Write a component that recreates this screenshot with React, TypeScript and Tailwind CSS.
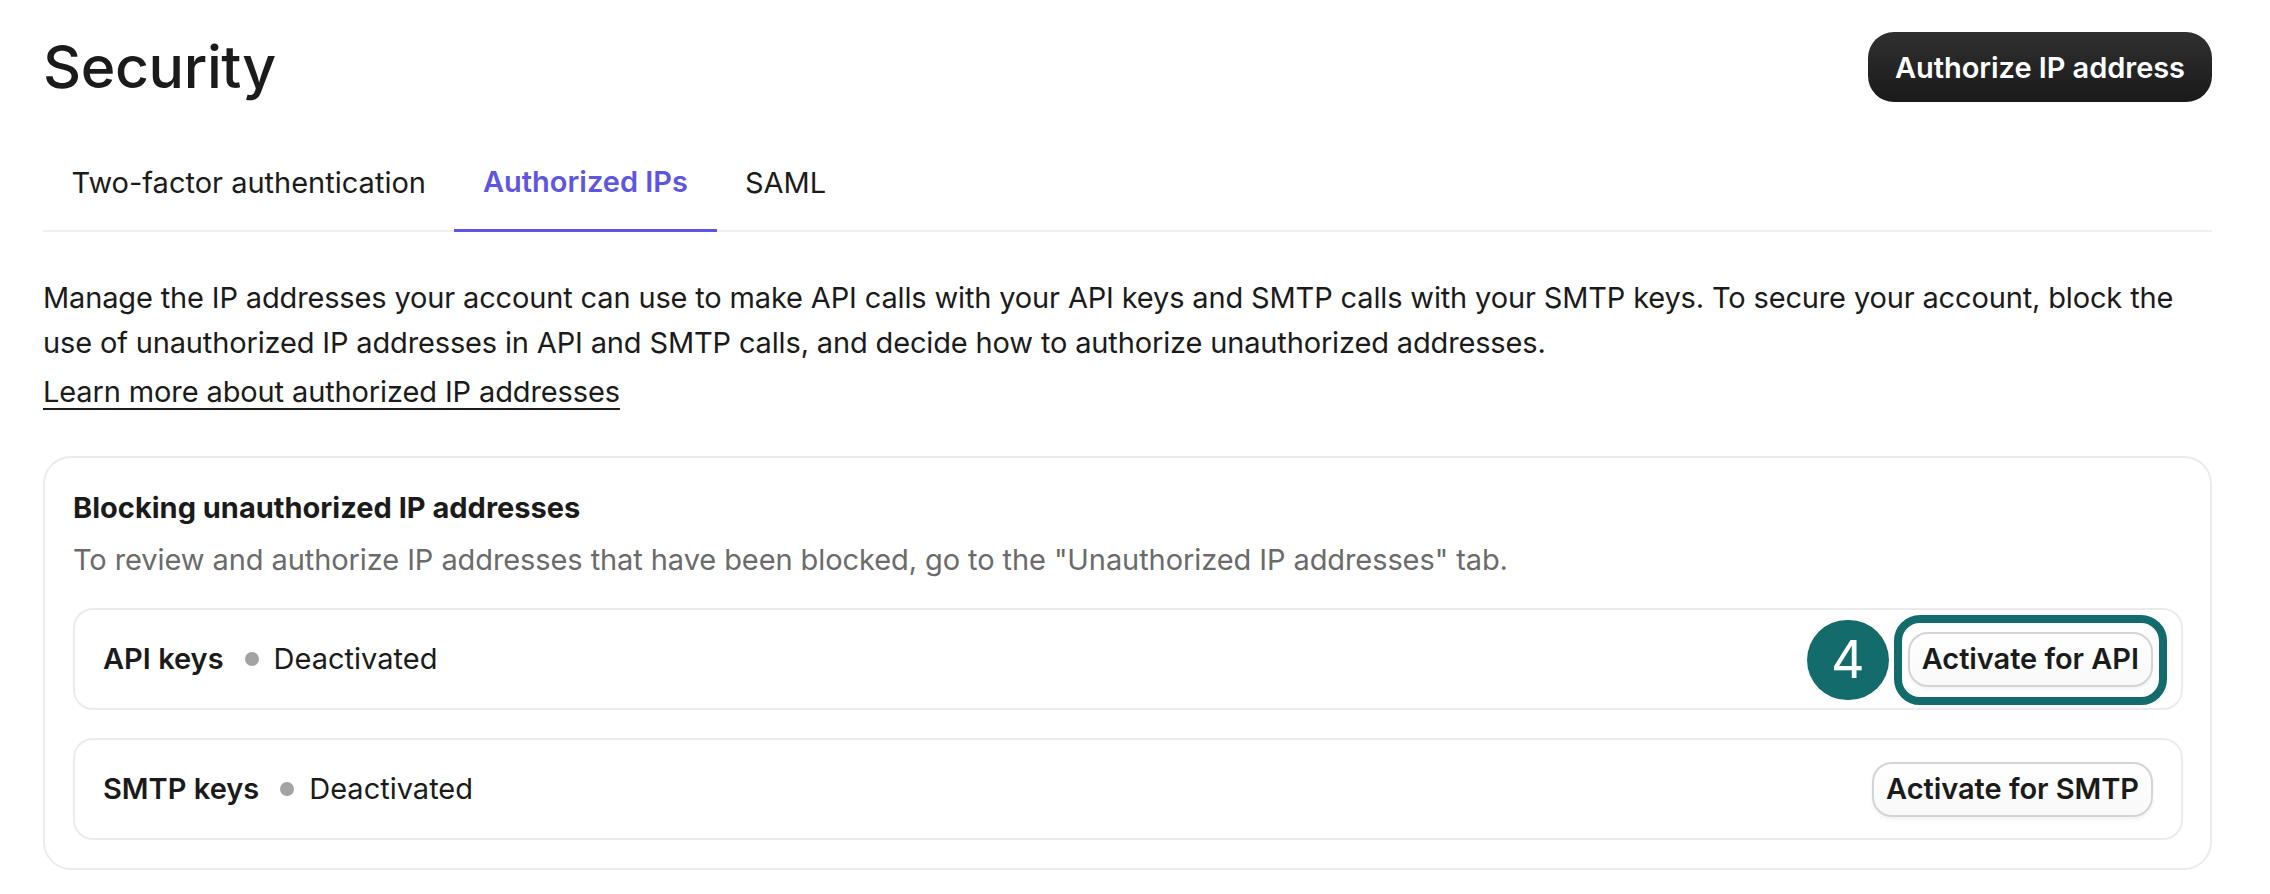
// Security settings - Authorized IPs tab

const TABS = [
  { label: 'Two-factor authentication', active: false },
  { label: 'Authorized IPs', active: true },
  { label: 'SAML', active: false },
];

function OutlineButton({ label }: { label: string }) {
  return (
    <button className="h-[55px] rounded-[20px] border-2 border-[#d4d4d4] bg-gradient-to-b from-white to-[#f9f9f9] px-[12px] text-[29px] font-semibold tracking-[-0.05px] text-[#1b1b1b] shadow-[0_2px_4px_rgba(0,0,0,0.06)]">
      {label}
    </button>
  );
}

function KeyRow({ name, action, highlighted }: { name: string; action: string; highlighted?: boolean }) {
  return (
    <div className="flex h-[102px] items-center rounded-[20px] border-2 border-[#ebebeb] pl-[28px] pr-[28px]">
      <span className="text-[29px] font-semibold text-[#1b1b1b]">{name}</span>
      <span className="ml-[21px] h-[14px] w-[14px] rounded-full bg-[#a3a3a3]" />
      <span className="ml-[15px] text-[29px] text-[#1b1b1b]">Deactivated</span>
      <div className="relative ml-auto">
        {highlighted && (
          <>
            <div className="absolute -bottom-[18px] -left-[14px] -right-[14px] -top-[17px] rounded-[26px] border-[8px] border-[#136c6b]" />
            <div className="absolute right-[calc(100%+19px)] top-[-12px] flex h-[80px] w-[82px] items-center justify-center rounded-full bg-[#136c6b] text-[52px] font-normal text-white">
              4
            </div>
          </>
        )}
        <OutlineButton label={action} />
      </div>
    </div>
  );
}

export default function App() {
  return (
    <div className="min-h-[894px] bg-white pl-[43px] pr-[58px] pt-[32px] font-['Inter',sans-serif] text-[#1b1b1b]">
      <header className="flex items-center justify-between">
        <h1 className="text-[59px] font-[450] leading-[70px] tracking-[-0.4px] text-[#1b1b1b]">Security</h1>
        <button className="h-[70px] rounded-[26px] bg-gradient-to-b from-[#303030] to-[#1a1a1a] px-[27px] pt-[2px] text-[29px] font-semibold tracking-[-0.05px] text-white">
          Authorize IP address
        </button>
      </header>

      <nav className="mt-[32px] flex border-b-2 border-[#efefef]">
        {TABS.map((tab) => (
          <div
            key={tab.label}
            className={`-mb-[2px] flex h-[98px] items-center px-[28.5px] text-[29px] ${
              tab.active
                ? 'border-b-[3px] border-[#5f56e0] font-semibold text-[#5f56e0]'
                : 'text-[#1b1b1b]'
            }`}
          >
            {tab.label}
          </div>
        ))}
      </nav>

      <p className="mt-[43px] text-[29px] leading-[45px] tracking-[-0.15px]">
        Manage the IP addresses your account can use to make API calls with your API keys and SMTP calls with your SMTP
        keys. To secure your account, block the use of unauthorized IP addresses in API and SMTP calls, and decide how
        to authorize unauthorized addresses.
      </p>
      <a className="mt-[4px] block w-fit text-[29px] leading-[45px] tracking-[-0.12px] underline decoration-2 underline-offset-[6px]">
        Learn more about authorized IP addresses
      </a>

      <section className="mt-[42px] h-[414px] rounded-[28px] border-2 border-[#ebebeb] pl-[28px] pr-[27px] pt-[30px]">
        <h2 className="text-[29px] font-[650] leading-[40px]">Blocking unauthorized IP addresses</h2>
        <p className="mt-[9px] text-[29px] leading-[45px] tracking-[-0.085px] text-[#6b6b6b]">
          To review and authorize IP addresses that have been blocked, go to the "Unauthorized IP addresses" tab.
        </p>
        <div className="mt-[26px] flex flex-col gap-[28px]">
          <KeyRow name="API keys" action="Activate for API" highlighted />
          <KeyRow name="SMTP keys" action="Activate for SMTP" />
        </div>
      </section>
    </div>
  );
}
